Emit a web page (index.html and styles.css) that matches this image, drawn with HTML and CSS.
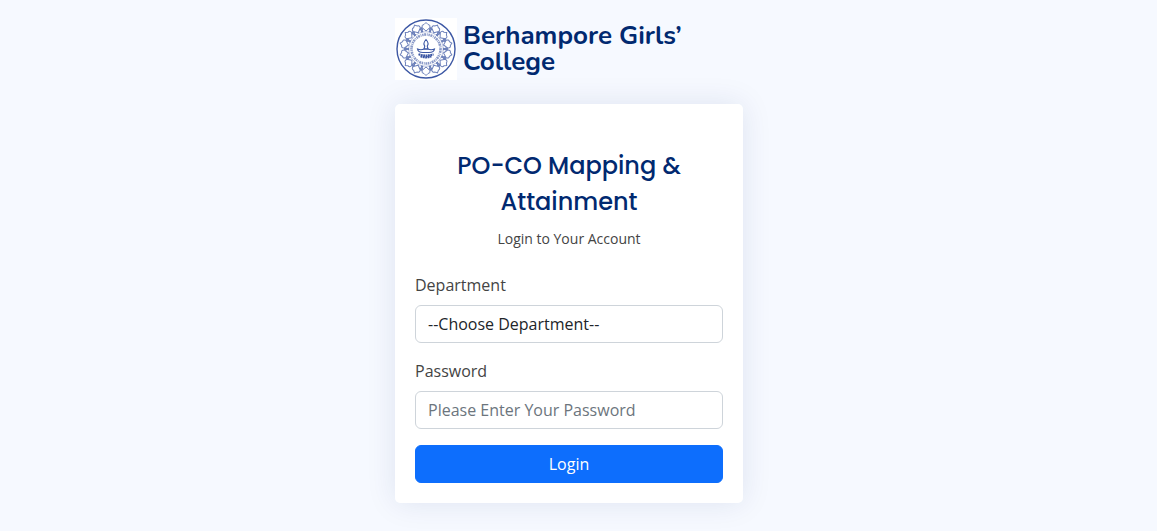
FILE: index.html
```html
<!DOCTYPE html>
<html lang="en">
<head>
  <meta charset="UTF-8">
  <meta name="viewport" content="width=device-width, initial-scale=1">
  <title>Berhampore Girls’ College</title>
  <link rel="stylesheet" href="styles.css">
</head>
<body>
  <main class="login">
    <a href="#" class="logo">
      <svg class="seal" viewBox="0 0 62 62" aria-hidden="true">
        <defs>
          <g id="petal">
            <path d="M31 13L27 9.500Q26.500 6.500 29 6.500L31 4.500L33 6.500Q35.500 6.500 35 9.500Z"/>
            <path d="M27 9.500L25.500 11.500L28 14M35 9.500L36.500 11.500L34 14" stroke-width="1.400"/>
          </g>
          <g id="petals">
            <use href="#petal"/>
            <use href="#petal" transform="rotate(25.710 31 31)"/>
            <use href="#petal" transform="rotate(51.430 31 31)"/>
            <use href="#petal" transform="rotate(77.140 31 31)"/>
            <use href="#petal" transform="rotate(102.860 31 31)"/>
            <use href="#petal" transform="rotate(128.570 31 31)"/>
            <use href="#petal" transform="rotate(154.290 31 31)"/>
          </g>
        </defs>
        <g fill="none" stroke="#3c57a4">
          <circle cx="31" cy="31" r="29" stroke-width="1.400"/>
          <g opacity=".75">
            <use href="#petals"/>
            <use href="#petals" transform="rotate(180 31 31)"/>
          </g>
          <circle cx="31" cy="31" r="17.200" stroke-width=".7" opacity=".5"/>
          <!-- ring of lettering -->
          <circle cx="31" cy="31" r="14.500" stroke-width="2.600" stroke-dasharray="1.400 .6 2 .8 .8 .8" opacity=".6"/>
          <!-- lamp on a lotus -->
          <path d="M31 21.500Q27.500 25.500 29.800 28L29 31H33L32.200 28Q34.500 25.500 31 21.500Z" stroke-width="1.100"/>
          <path d="M22.500 31Q26 32.500 29 31H33Q36 32.500 39.500 31Q39 34.500 34 34.500H28Q23 34.500 22.500 31Z" stroke-width="1.100"/>
          <path d="M23.500 36.300Q31 38.800 38.500 36.300M25.500 38.300Q31 40.300 36.500 38.300" stroke-width="2.200" stroke-dasharray="1.900 .5"/>
        </g>
      </svg>
      <span>Berhampore Girls’ College</span>
    </a>

    <div class="card">
      <div class="card-head">
        <h1>PO-CO Mapping &amp; Attainment</h1>
        <p>Login to Your Account</p>
      </div>

      <form class="login-form">
        <div class="field">
          <label for="department">Department</label>
          <select id="department" name="department">
            <option value="">--Choose Department--</option>
          </select>
        </div>
        <div class="field">
          <label for="password">Password</label>
          <input type="password" id="password" name="password" placeholder="Please Enter Your Password">
        </div>
        <button type="submit">Login</button>
      </form>
    </div>
  </main>
</body>
</html>
```
FILE: styles.css
```css
* {
  box-sizing: border-box;
}

body {
  margin: 0;
  padding: 18px 19px 28px 0;
  background: #f6f9ff;
  color: #444444;
  font-family: "Open Sans", sans-serif;
  font-size: 16px;
  line-height: 24px;
}

.login {
  max-width: 348px;
  margin: 0 auto;
}

.logo {
  display: flex;
  align-items: center;
  gap: 6px;
  margin-bottom: 24px;
  text-decoration: none;
}

.logo span {
  font-family: Nunito, Lato, sans-serif;
  font-size: 26px;
  font-weight: 700;
  line-height: 26px;
  color: #012970;
  max-width: 240px;
}

.seal {
  flex: none;
  width: 62px;
  height: 62px;
  background: #fff;
}

.card {
  padding: 20px;
  background: #fff;
  border-radius: 5px;
  box-shadow: 0 0 30px rgba(1, 41, 112, 0.1);
}

.card-head {
  padding: 24px 0;
  text-align: center;
}

.card-head h1 {
  margin: 0 0 8px;
  font-family: Poppins, Inter, sans-serif;
  font-size: 24px;
  font-weight: 500;
  line-height: 36px;
  color: #012970;
}

.card-head p {
  margin: 0;
  font-size: 14px;
  line-height: 21px;
}

.login-form {
  display: grid;
  gap: 16px;
}

.field {
  display: grid;
  gap: 8px;
}

select,
input,
button {
  width: 100%;
  height: 38px;
  margin: 0;
  padding: 6px 12px;
  border: 1px solid #ced4da;
  border-radius: 6px;
  background: #fff;
  color: #212529;
  font: inherit;
  appearance: none;
}

input::placeholder {
  color: #6c757d;
}

button {
  border-color: #0d6efd;
  background: #0d6efd;
  color: #fff;
  cursor: pointer;
}

button:hover {
  background: #0b5ed7;
}
```
